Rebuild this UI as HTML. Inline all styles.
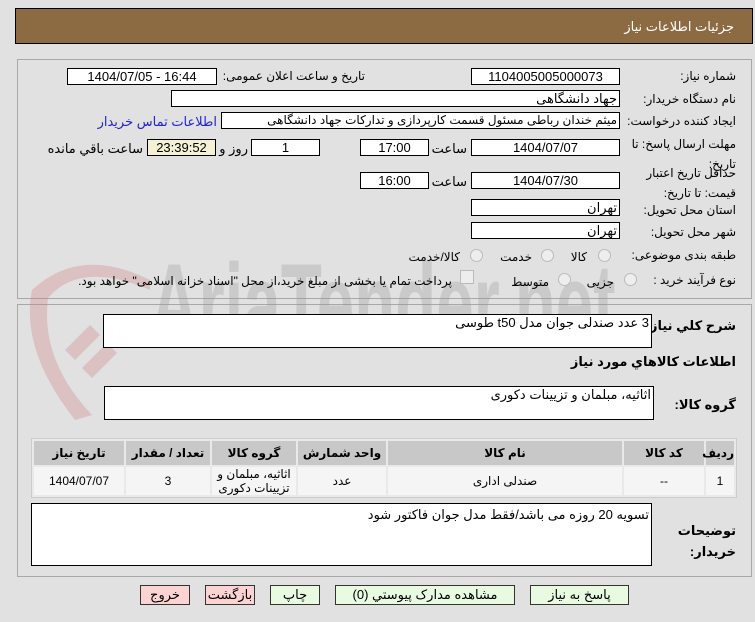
<!DOCTYPE html>
<html><head><meta charset="utf-8"><style>
body{margin:0;width:755px;height:622px;background:#e1e1e1;font-family:Tahoma,"Liberation Sans","DejaVu Sans",sans-serif;font-size:12px;color:#000;position:relative;overflow:hidden}
.a{position:absolute}
.hdr{left:15px;top:8px;width:736px;height:34px;background:#8c6b42;border:1px solid #000}
.hdr span{position:absolute;right:18px;top:10px;color:#fff;font-size:13px}
.pn{border:1px solid #a8a8a8}
.in{position:absolute;background:#fff;border:1px solid #000;height:17px;box-sizing:border-box;font-size:13px;line-height:15px;text-align:center;direction:ltr;overflow:hidden;white-space:nowrap}
.r{direction:rtl;text-align:right;padding-right:2px}
.l{position:absolute;direction:rtl;white-space:nowrap;font-size:12px}
.rad{position:absolute;width:11px;height:11px;border-radius:50%;border:1px solid #bbb;background:#eee}
.b{font-weight:bold;font-size:13px}
table{border-collapse:separate;border-spacing:2px;background:#e9e9e9;border:1px solid #ccc;table-layout:fixed}
td{text-align:center;font-size:12px;padding:0}
.th td{background:#c8c8c8;font-weight:bold;height:24px}
.tr td{background:#f5f5f5;height:26px}
.btn{position:absolute;height:20px;box-sizing:border-box;border:1px solid #333;text-align:center;font-size:13px;line-height:18px;direction:rtl}
.wm{position:absolute;left:150px;top:248px;font-size:112px;font-weight:bold;color:rgba(150,150,150,.3);font-family:"Liberation Sans",sans-serif;line-height:1;transform:scaleX(.6);transform-origin:0 0;white-space:nowrap}
</style></head><body>
<div class="a hdr"><span>جزئیات اطلاعات نیاز</span></div>

<div class="a pn" style="left:17px;top:59px;width:733px;height:238px"></div>
<div class="a pn" style="left:17px;top:304px;width:733px;height:271px"></div>

<div class="wm">AriaTender.net</div>
<svg class="a" style="left:20px;top:250px" width="130" height="170" viewBox="0 0 130 170"><path d="M12 40 Q60 -5 130 30 L130 40 Q60 10 28 48 Q20 110 72 165 L55 170 Q0 100 12 40Z" fill="rgba(205,120,120,.3)"/><path d="M45 100 l25 -25 l10 10 l-25 25z M62 118 l25 -25 l10 10 l-25 25z" fill="rgba(205,120,120,.3)"/></svg>

<div class="l" style="right:19px;top:69px">شماره نیاز:</div>
<div class="in" style="left:471px;top:68px;width:149px">1104005005000073</div>
<div class="l" style="right:390px;top:69px">تاریخ و ساعت اعلان عمومی:</div>
<div class="in" style="left:67px;top:68px;width:150px">1404/07/05 - 16:44</div>

<div class="l" style="right:19px;top:92px">نام دستگاه خریدار:</div>
<div class="in r" style="left:171px;top:90px;width:449px">جهاد دانشگاهی</div>

<div class="l" style="right:19px;top:114px">ایجاد کننده درخواست:</div>
<div class="in r" style="left:221px;top:112px;width:399px;font-size:12px">میثم خندان رباطی مسئول قسمت کارپردازی و تداركات جهاد دانشگاهی</div>
<div class="l" style="right:538px;top:114px;color:#2323d0;font-size:13px">اطلاعات تماس خریدار</div>

<div class="l" style="right:19px;top:134px;text-align:right;line-height:20px">مهلت ارسال پاسخ: تا<br>تاریخ:</div>
<div class="in" style="left:471px;top:139px;width:149px">1404/07/07</div>
<div class="l" style="right:288px;top:141px;font-size:13px">ساعت</div>
<div class="in" style="left:360px;top:139px;width:69px">17:00</div>
<div class="in" style="left:251px;top:139px;width:69px">1</div>
<div class="l" style="right:507px;top:141px;font-size:13px">روز و</div>
<div class="in" style="left:147px;top:139px;width:69px;background:#f4f1d4">23:39:52</div>
<div class="l" style="right:612px;top:141px;font-size:13px">ساعت باقي مانده</div>

<div class="l" style="right:19px;top:163px;text-align:right;line-height:20px">حداقل تاریخ اعتبار<br>قیمت: تا تاریخ:</div>
<div class="in" style="left:471px;top:172px;width:149px">1404/07/30</div>
<div class="l" style="right:288px;top:174px;font-size:13px">ساعت</div>
<div class="in" style="left:360px;top:172px;width:69px">16:00</div>

<div class="l" style="right:19px;top:203px">استان محل تحویل:</div>
<div class="in r" style="left:471px;top:199px;width:149px">تهران</div>
<div class="l" style="right:19px;top:225px">شهر محل تحویل:</div>
<div class="in r" style="left:471px;top:222px;width:149px">تهران</div>

<div class="l" style="right:19px;top:248px">طبقه بندی موضوعی:</div>
<div class="rad" style="left:598px;top:249px"></div><div class="l" style="right:168px;top:250px">کالا</div>
<div class="rad" style="left:541px;top:249px"></div><div class="l" style="right:223px;top:250px">خدمت</div>
<div class="rad" style="left:470px;top:249px"></div><div class="l" style="right:295px;top:250px">کالا/خدمت</div>

<div class="l" style="right:19px;top:273px">نوع فرآیند خرید :</div>
<div class="rad" style="left:624px;top:273px"></div><div class="l" style="right:141px;top:275px">جزیی</div>
<div class="rad" style="left:558px;top:273px"></div><div class="l" style="right:206px;top:275px">متوسط</div>
<div class="a" style="left:460px;top:270px;width:12px;height:12px;border:1px solid #bbb;background:#eee"></div>
<div class="l" style="right:303px;top:274px">پرداخت تمام یا بخشی از مبلغ خرید،از محل "اسناد خزانه اسلامی" خواهد بود.</div>

<div class="l b" style="right:19px;top:318px">شرح كلي نیاز:</div>
<div class="in r" style="left:103px;top:314px;width:549px;height:34px;text-align:right">3 عدد صندلی جوان مدل t50 طوسی</div>
<div class="l b" style="right:19px;top:354px">اطلاعات کالاهاي مورد نیاز</div>

<div class="l b" style="right:19px;top:397px">گروه کالا:</div>
<div class="in r" style="left:104px;top:386px;width:550px;height:34px;text-align:right">اثاثیه، مبلمان و تزیینات دکوری</div>

<table class="a" style="left:31px;top:438px;width:706px;direction:rtl">
<tr class="th"><td style="width:28px">ردیف</td><td style="width:80px">کد کالا</td><td style="width:234px">نام کالا</td><td style="width:88px">واحد شمارش</td><td style="width:84px">گروه کالا</td><td style="width:84px">تعداد / مقدار</td><td>تاریخ نیاز</td></tr>
<tr class="tr"><td>1</td><td>--</td><td>صندلی اداری</td><td>عدد</td><td style="line-height:14px">اثاثیه، مبلمان و تزیینات دکوری</td><td>3</td><td>1404/07/07</td></tr>
</table>

<div class="l b" style="right:19px;top:520px;text-align:right;line-height:21px">توضیحات<br>خریدار:</div>
<div class="in r" style="left:31px;top:503px;width:621px;height:63px;text-align:right;line-height:22px">تسویه 20 روزه می باشد/فقط مدل جوان فاکتور شود</div>

<div class="btn" style="left:140px;top:585px;width:50px;background:#fbd3d3">خروج</div>
<div class="btn" style="left:205px;top:585px;width:50px;background:#fbd3d3">بازگشت</div>
<div class="btn" style="left:270px;top:585px;width:50px;background:#e8fbe1">چاپ</div>
<div class="btn" style="left:335px;top:585px;width:180px;background:#e8fbe1">مشاهده مدارک پیوستي (0)</div>
<div class="btn" style="left:530px;top:585px;width:99px;background:#e8fbe1">پاسخ به نیاز</div>
</body></html>
